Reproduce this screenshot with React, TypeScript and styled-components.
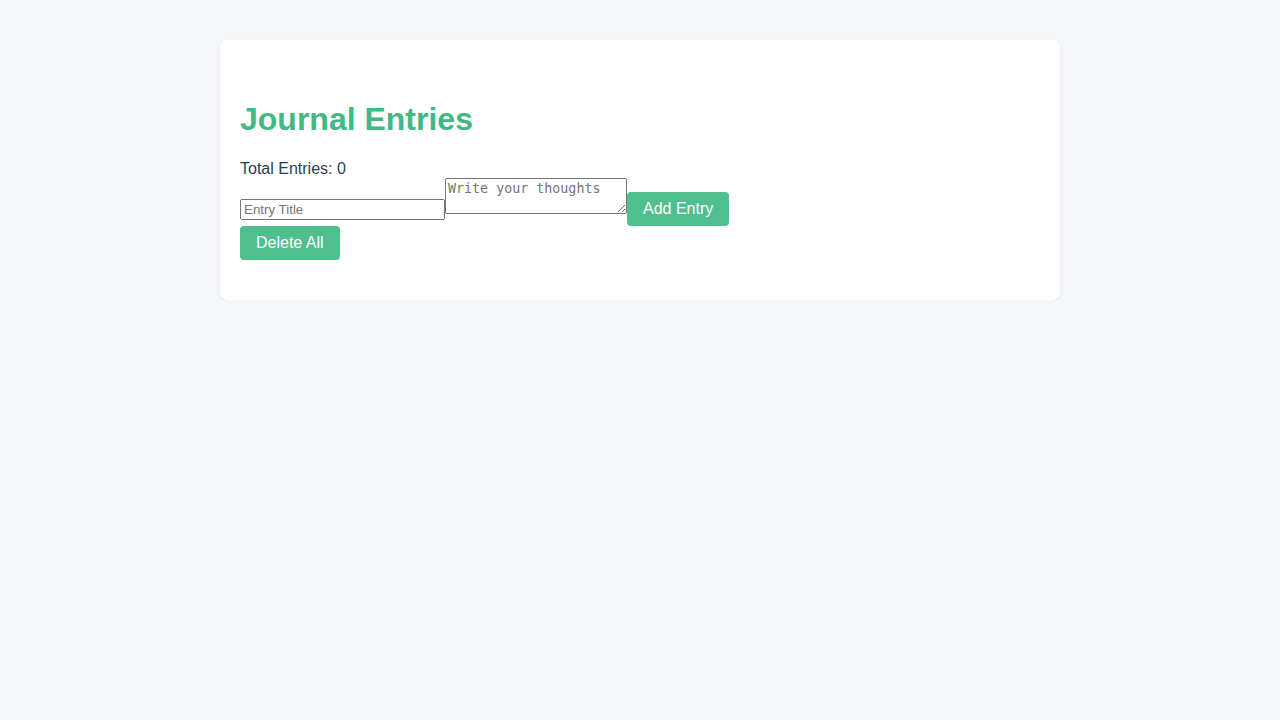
import React, { useState } from "react";
import styled, { createGlobalStyle } from "styled-components";

const GlobalStyle = createGlobalStyle`
  html, body {
    margin: 0;
    padding: 0;
    background: #f4f6f9;
    font-family: "Liberation Sans", Arial, sans-serif;
    color: #2c3e50;
  }
`;

const Page = styled.div`
  padding-top: 40px;
`;

const Card = styled.div`
  box-sizing: border-box;
  width: 840px;
  margin: 0 auto;
  padding: 40px 20px;
  background: #ffffff;
  border-radius: 8px;
  box-shadow: 0 2px 4px rgba(0, 0, 0, 0.06);
`;

const Title = styled.h1`
  margin: 21.44px 0;
  font-size: 32px;
  font-weight: bold;
  color: #42b983;
`;

const Total = styled.div`
  font-size: 16px;
  line-height: 18.4px;
`;

const Form = styled.div``;

const TitleInput = styled.input`
  box-sizing: border-box;
  width: 205px;
  font: 13.333px "Liberation Sans", Arial, sans-serif;
`;

const Thoughts = styled.textarea`
  font: 13.333px "DejaVu Sans Mono", monospace;
`;

const Button = styled.button`
  font: 16px "Liberation Sans", Arial, sans-serif;
  padding: 8px 16px;
  border: none;
  border-radius: 4px;
  background: #4fc08d;
  color: #ffffff;
  cursor: pointer;
`;

export default function App() {
  const [title, setTitle] = useState("");
  const [text, setText] = useState("");
  const [entries, setEntries] = useState<{ title: string; text: string }[]>([]);
  return (
    <Page>
      <GlobalStyle />
      <Card>
        <Title>Journal Entries</Title>
        <Total>Total Entries: {entries.length}</Total>
        <Form>
          <TitleInput
            placeholder="Entry Title"
            value={title}
            onChange={(e) => setTitle(e.target.value)}
          /><Thoughts
            placeholder="Write your thoughts"
            value={text}
            onChange={(e) => setText(e.target.value)}
          /><Button
            onClick={() => {
              if (title || text) {
                setEntries([...entries, { title, text }]);
                setTitle("");
                setText("");
              }
            }}
          >
            Add Entry
          </Button>
        </Form>
        <Button onClick={() => setEntries([])}>Delete All</Button>
      </Card>
    </Page>
  );
}
